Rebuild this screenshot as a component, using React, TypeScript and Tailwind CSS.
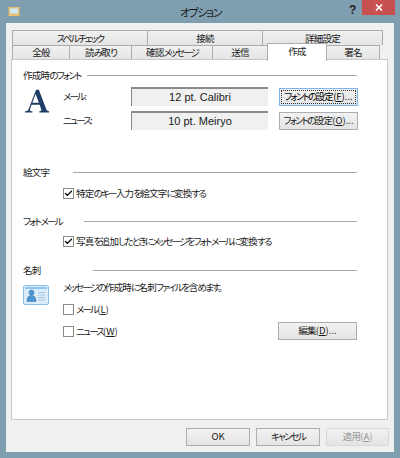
import type { ReactNode } from 'react';
import { Check } from 'lucide-react';

const topTabs = [
    { label: 'スペル チェック', width: 'w-[136px]' },
    { label: '接続', width: 'w-[116px]' },
    { label: '詳細設定', width: 'w-[121px]' },
];

const bottomTabs = [
    { label: '全般', width: 'w-[58px]' },
    { label: '読み取り', width: 'w-[63px]' },
    { label: '確認メッセージ', width: 'w-[82px]' },
    { label: '送信', width: 'w-[56px]' },
    { label: '作成', width: 'w-[60px]', active: true },
    { label: '署名', width: 'w-[54px]' },
];

// Kana in the dialog font is much narrower than kanji, so squeeze them separately
function Jp({ text }: { text: string }) {
    return (
        <>
            {text.split(/([\u4e00-\u9fff]+)/).map((part, i) => (
                <span key={i} className={i % 2 === 1 ? 'tracking-[-0.7px]' : 'tracking-[-1.8px]'}>
                    {part}
                </span>
            ))}
        </>
    );
}

function SectionTitle({ text, width }: { text: string; width: string }) {
    return (
        <div className="flex items-center h-[16px] pr-[30px]">
            <span className={`${width} text-[9.5px] leading-[16px] text-[#1a1a1a]`}>
                <Jp text={text} />
            </span>
            <div className="flex-1 h-px bg-[#a8a8a8]" />
        </div>
    );
}

function Btn({ children, focused, disabled, className }: { children: ReactNode; focused?: boolean; disabled?: boolean; className: string }) {
    return (
        <div
            className={`flex items-center justify-center h-[18px] text-[9.5px] leading-none whitespace-nowrap border bg-gradient-to-b from-[#f2f2f2] to-[#e4e4e4] ${className} ${
                focused ? 'border-[#7eb4ea]' : disabled ? 'border-[#d9d9d9] text-[#9a9a9a]' : 'border-[#adadad] text-[#1a1a1a]'
            }`}
        >
            {focused ? (
                <span className="flex items-center justify-center w-[75px] h-[14px] border border-dotted border-[#333]">{children}</span>
            ) : (
                children
            )}
        </div>
    );
}

function CheckBox({ checked, children }: { checked?: boolean; children: ReactNode }) {
    return (
        <div className="flex items-center gap-[2px] h-[14px]">
            <div className="flex items-center justify-center w-[9px] h-[9px] box-content border border-[#8a8a8a] bg-white">
                {checked && <Check className="w-[9px] h-[9px] text-black" strokeWidth={3.5} />}
            </div>
            <span className="text-[9.5px] leading-[14px] text-[#1a1a1a]">{children}</span>
        </div>
    );
}

function FontRow({ label, value, button, shortcut }: { label: string; value: string; button: string; shortcut: string }) {
    return (
        <div className="flex items-center h-[19px]">
            <span className="w-[68px] text-[9.5px] text-[#1a1a1a]">
                <Jp text={label} />
            </span>
            <div className="flex items-center justify-center w-[137px] h-[19px] bg-[#f0f0f0] border-t-2 border-l border-[#8a8a8a] text-[11px] text-[#1a1a1a] [font-family:'Liberation_Sans',sans-serif]">
                {value}
            </div>
            <Btn focused={shortcut === 'F'} className="ml-[11px] w-[79px]">
                <span>
                    <Jp text={button} />(<u>{shortcut}</u>)...
                </span>
            </Btn>
        </div>
    );
}

function FontIcon() {
    return (
        <svg width="28" height="26" viewBox="0 0 28 28" className="shrink-0">
            <path
                d="M1 26.5 L1 25 C3 25 4 24.5 5 22.5 L13 2 L16 2 L24 23 C24.7 24.5 25.5 25 27 25 L27 26.5 L16.5 26.5 L16.5 25 C18.5 25 19 24.5 18.5 23 L16.8 18 L8.2 18 L6.5 22.5 C6 24.2 6.8 25 9 25 L9 26.5 Z M9 15.8 L16 15.8 L12.5 6.5 Z"
                fill="#1f3f66"
                fillRule="evenodd"
            />
        </svg>
    );
}

function CardIcon() {
    return (
        <svg width="26" height="20" viewBox="0 0 26 20" className="shrink-0">
            <rect x="0.5" y="0.5" width="25" height="19" rx="1.5" fill="#dcedfa" stroke="#8cbfe6" />
            <rect x="2" y="2" width="22" height="2" fill="#8ec4ee" />
            <circle cx="8.5" cy="7.5" r="2.5" fill="#4f94d2" stroke="#2f6ea8" strokeWidth="0.5" />
            <path d="M4 16.5 C4 12 6 10.5 8.5 10.5 C11 10.5 13 12 13 16.5 Z" fill="#4f94d2" stroke="#2f6ea8" strokeWidth="0.5" />
            <path d="M15 7.5h7M15 10h7M15 12.5h7M15 15h7" stroke="#a5c8e4" strokeWidth="1" />
        </svg>
    );
}

export default function App() {
    return (
        <div className="w-[400px] h-[458px] bg-[#7f9fb1] flex flex-col overflow-hidden [font-family:'Noto_Sans_CJK_JP','Liberation_Sans',sans-serif] [font-feature-settings:'palt']">
            {/* Title bar */}
            <div className="relative flex items-center justify-center h-[23px] shrink-0">
                <svg width="12" height="12" viewBox="0 0 12 12" className="absolute left-[8px] top-[6px]">
                    <rect x="0.5" y="1" width="11" height="9" fill="#e8c070" />
                    <rect x="2" y="2.5" width="8" height="5" fill="#cfe6f5" />
                </svg>
                <span className="text-[11px] tracking-[-1.4px] text-[#1a1a1a] pl-[1px] pt-[2px]">オプション</span>
                <span className="absolute left-[349px] top-[1px] text-[12px] font-bold text-[#222] [font-family:'Liberation_Sans',sans-serif]">?</span>
                <div className="absolute left-[362px] top-0 w-[33px] h-[15px] bg-[#c75050] flex items-center justify-center">
                    <svg width="8" height="7" viewBox="0 0 8 7">
                        <path d="M1 0.5 L7 6.5 M7 0.5 L1 6.5" stroke="#fff" strokeWidth="1.6" />
                    </svg>
                </div>
            </div>

            {/* Client area */}
            <div className="mx-[6px] h-[429px] bg-[#f0f0f0] px-[5px] pt-[7px] flex flex-col">
                {/* Tabs */}
                <div className="flex pl-[1px] h-[15px]">
                    {topTabs.map(tab => (
                        <div
                            key={tab.label}
                            className={`${tab.width} flex items-center justify-center text-[9.5px] text-[#1a1a1a] bg-gradient-to-b from-[#f0f0f0] to-[#e5e5e5] border border-b-0 border-[#acacac] -mr-px`}
                        >
                            <Jp text={tab.label} />
                        </div>
                    ))}
                </div>
                <div className="flex pl-[1px] h-[14px] relative z-10">
                    {bottomTabs.map(tab => (
                        <div
                            key={tab.label}
                            className={
                                tab.active
                                    ? `${tab.width} h-[18px] -mt-[2px] pb-[3px] flex items-center justify-center text-[9.5px] text-[#1a1a1a] bg-white border border-b-0 border-[#acacac] -mr-px relative z-10`
                                    : `${tab.width} flex items-center justify-center text-[9.5px] text-[#1a1a1a] bg-gradient-to-b from-[#f0f0f0] to-[#e5e5e5] border border-b-0 border-[#acacac] -mr-px`
                            }
                        >
                            <Jp text={tab.label} />
                        </div>
                    ))}
                </div>

                {/* Panel */}
                <div className="w-[377px] h-[361px] bg-white border border-[#c8c8c8] pl-[11px] pt-[7px] flex flex-col">
                    <SectionTitle width="w-[64px]" text="作成時のフォント" />
                    <div className="flex mt-[4px]">
                        <div className="w-[40px] pt-[1px]">
                            <FontIcon />
                        </div>
                        <div className="flex flex-col gap-[5px]">
                            <FontRow label="メール:" value="12 pt. Calibri" button="フォントの設定" shortcut="F" />
                            <FontRow label="ニュース:" value="10 pt. Meiryo" button="フォントの設定" shortcut="O" />
                        </div>
                    </div>

                    <div className="mt-[34px]">
                        <SectionTitle width="w-[50px]" text="絵文字" />
                    </div>
                    <div className="pl-[40px] mt-[6px]">
                        <CheckBox checked>
                            <Jp text="特定のキー入力を絵文字に変換する" />
                        </CheckBox>
                    </div>

                    <div className="mt-[13px]">
                        <SectionTitle width="w-[61px]" text="フォト メール" />
                    </div>
                    <div className="pl-[40px] mt-[5px]">
                        <CheckBox checked>
                            <Jp text="写真を追加したときにメッセージをフォト メールに変換する" />
                        </CheckBox>
                    </div>

                    <div className="mt-[14px]">
                        <SectionTitle width="w-[70px]" text="名刺" />
                    </div>
                    <div className="flex mt-[1px]">
                        <div className="w-[40px] pt-[6px]">
                            <CardIcon />
                        </div>
                        <div className="flex-1 flex flex-col">
                            <span className="text-[9.5px] leading-[16px] text-[#1a1a1a] h-[16px]">
                                <Jp text="メッセージの作成時に名刺ファイルを含めます。" />
                            </span>
                            <div className="mt-[7px]">
                                <CheckBox>
                                    <Jp text="メール" />(<u>L</u>)
                                </CheckBox>
                            </div>
                            <div className="flex items-center justify-between mt-[6px] pr-[30px]">
                                <CheckBox>
                                    <Jp text="ニュース" />(<u>W</u>)
                                </CheckBox>
                                <Btn className="w-[79px]">
                                    <span>
                                        <Jp text="編集" />(<u>D</u>)...
                                    </span>
                                </Btn>
                            </div>
                        </div>
                    </div>
                </div>

                {/* Footer buttons */}
                <div className="flex justify-end gap-[6px] mt-[8px]">
                    <Btn className="w-[64px]">OK</Btn>
                    <Btn className="w-[64px]">
                        <Jp text="キャンセル" />
                    </Btn>
                    <Btn disabled className="w-[63px]">
                        <span>
                            <Jp text="適用" />(<u>A</u>)
                        </span>
                    </Btn>
                </div>
            </div>
        </div>
    );
}
